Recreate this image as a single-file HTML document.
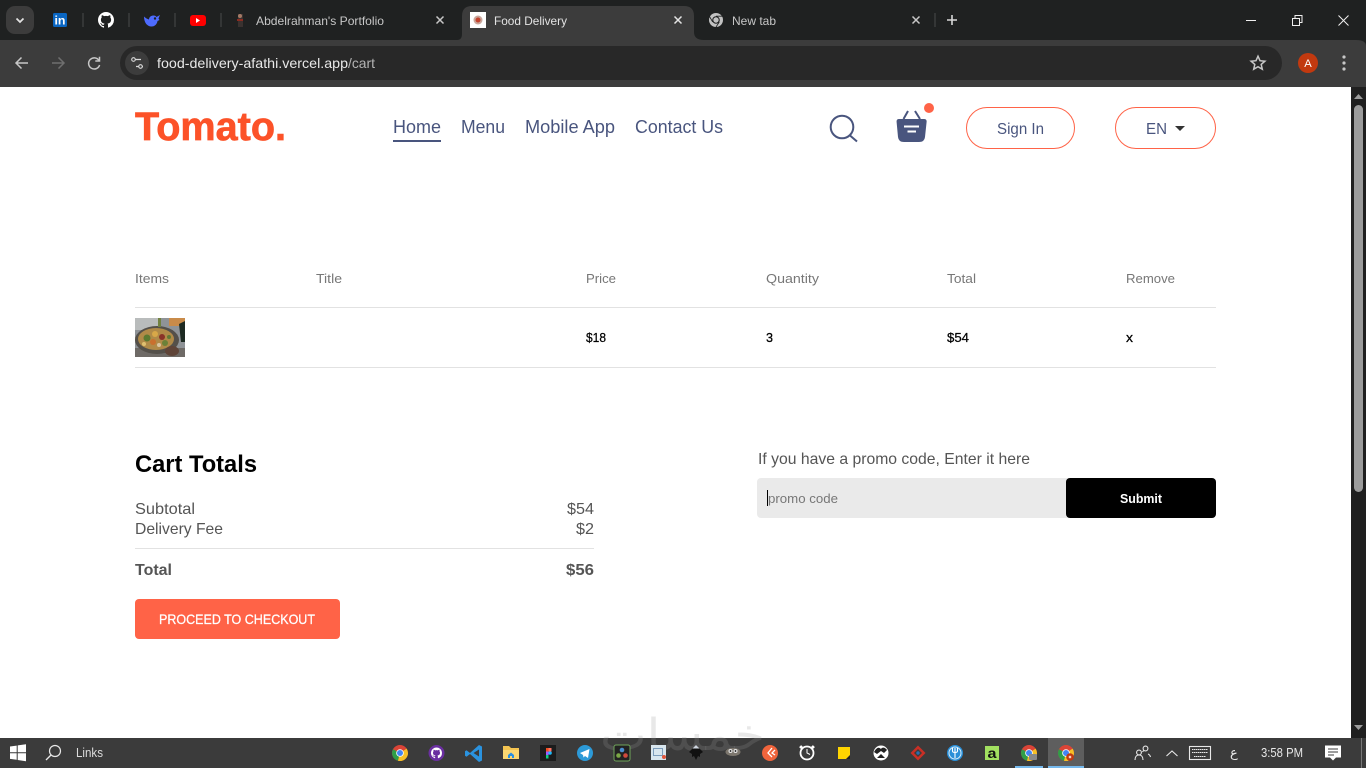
<!DOCTYPE html>
<html lang="en">
<head>
<meta charset="utf-8">
<title>Food Delivery</title>
<style>
html,body{margin:0;padding:0;width:1366px;height:768px;overflow:hidden;background:#fff}
svg{display:block}
text{font-family:"Liberation Sans",sans-serif}
.n{font-size:18px;fill:#49557e}
.h{font-size:13px;fill:#777}
.r{font-size:13px;fill:#000;stroke:#000;stroke-width:.25}
.b{font-size:16px;fill:#555}
.tab{font-size:12px;fill:#c7c7c7}
.ic{fill:none;stroke:#c7c7c7;stroke-width:1.5}
</style>
</head>
<body>
<svg width="1366" height="768" viewBox="0 0 1366 768" xmlns="http://www.w3.org/2000/svg">
<defs>
<symbol id="chrome" viewBox="0 0 16 16">
<circle cx="8" cy="8" r="8" fill="#db4437"/>
<path d="M8 8 1 4.200A8 8 0 0 0 6 15.800z" fill="#2f9e48"/>
<path d="M8 8 6 15.800A8 8 0 0 0 16 8 8 8 0 0 0 14.600 3.600z" fill="#f6c026"/>
<circle cx="8" cy="8" r="3.800" fill="#fff"/><circle cx="8" cy="8" r="3" fill="#4285f4"/>
</symbol>
<symbol id="gh" viewBox="0 0 16 16">
<path fill="currentColor" d="M8 0C3.580 0 0 3.580 0 8c0 3.540 2.290 6.530 5.470 7.590.4.070.55-.17.55-.38v-1.340c-2.230.48-2.690-1.070-2.690-1.070-.36-.93-.89-1.170-.89-1.170-.73-.5.050-.49.050-.49.8.060 1.230.82 1.230.82.71 1.220 1.870.87 2.330.66.070-.52.28-.87.5-1.070-1.780-.2-3.640-.89-3.640-3.950 0-.87.31-1.590.82-2.150-.08-.2-.36-1.020.08-2.120 0 0 .67-.21 2.200.82a7.600 7.600 0 0 1 4 0c1.530-1.030 2.200-.82 2.200-.82.44 1.100.16 1.920.08 2.120.51.56.82 1.270.82 2.150 0 3.070-1.870 3.750-3.650 3.950.29.25.54.73.54 1.480v2.200c0 .21.15.46.55.38A8 8 0 0 0 16 8c0-4.420-3.580-8-8-8z"/>
</symbol>
</defs>

<!-- page -->
<rect width="1366" height="768" fill="#fff"/>

<!-- browser chrome -->
<rect width="1366" height="40" fill="#1f2121"/>
<rect y="30" width="1366" height="57" fill="#3c3c3c"/>
<path d="M0 40C0 40 4 40 10 40H457Q462 40 462 34V16Q462 6 472 6H684Q694 6 694 16V32Q694 40 704 40H1356Q1366 40 1366 46V30H0Z" fill="#1f2121"/>
<path d="M462 46V16Q462 6 472 6H684Q694 6 694 16V46Z" fill="#3c3c3c"/>
<rect x="6" y="6" width="28" height="28" rx="9" fill="#3c3c3c"/>
<path d="M16.500 18.500 20 22l3.500-3.500" fill="none" stroke="#e3e3e3" stroke-width="1.700"/>

<!-- pinned tabs -->
<rect x="53" y="13" width="14" height="14" rx="1.500" fill="#0a66c2"/>
<text x="54.500" y="24.500" font-size="11.500" font-weight="bold" fill="#fff" textLength="11" lengthAdjust="spacingAndGlyphs">in</text>
<g fill="#4a4c4c"><rect x="82.500" y="13" width="1" height="14"/><rect x="128.500" y="13" width="1" height="14"/><rect x="174.500" y="13" width="1" height="14"/><rect x="220.500" y="13" width="1" height="14"/><rect x="934.500" y="13" width="1" height="14"/></g>
<use href="#gh" x="98" y="12" width="16" height="16" color="#fff"/>
<path d="M144 16.500c1.500 1.500 3 2.500 5 3 0-2 1.500-4 4.500-4 1.500 0 2.500.5 3 1.500l3.500-2-1.500 3.500 1 1.500-2 1c-.5 3-2.500 5.500-6 5.500-4 0-7.500-3.500-7.500-10z" fill="#4d6bfe"/>
<circle cx="155" cy="18.500" r="1.200" fill="#1f2121"/>
<rect x="190" y="15" width="16" height="11" rx="3" fill="#f00"/>
<path d="M196 18v5l4-2.500z" fill="#fff"/>

<!-- portfolio tab -->
<rect x="238" y="14" width="5" height="13" fill="#3a3230"/><circle cx="240" cy="16" r="2" fill="#a47a66"/><rect x="237" y="19" width="6" height="2" fill="#8a2b20"/>
<text x="256" y="25" class="tab" textLength="128" lengthAdjust="spacingAndGlyphs">Abdelrahman's Portfolio</text>
<path d="M436.500 16.500l7 7m0-7l-7 7" stroke="#c7c7c7" stroke-width="1.500"/>

<!-- active tab -->
<rect x="470" y="12" width="16" height="16" fill="#fff"/>
<circle cx="478" cy="20" r="4.500" fill="#c9a79c"/><circle cx="478" cy="20" r="2.500" fill="#c4432e"/>
<text x="494" y="25" class="tab" style="fill:#e3e3e3" textLength="73" lengthAdjust="spacingAndGlyphs">Food Delivery</text>
<path d="M674.500 16.500l7 7m0-7l-7 7" stroke="#e3e3e3" stroke-width="1.500"/>

<!-- new tab -->
<circle cx="716" cy="20" r="7" fill="#c2c2c2"/><circle cx="716" cy="20" r="3.800" fill="#1f2121"/><circle cx="716" cy="20" r="2.700" fill="#c2c2c2"/>
<path d="M716 16.200h6.500M712.700 22 709.500 16.500M719.300 22 716 27" stroke="#1f2121" stroke-width=".8"/>
<text x="732" y="25" class="tab" textLength="44" lengthAdjust="spacingAndGlyphs">New tab</text>
<path d="M912.500 16.500l7 7m0-7l-7 7" stroke="#c7c7c7" stroke-width="1.500"/>
<path d="M952 15v10M947 20h10" stroke="#d8d8d8" stroke-width="1.600"/>

<!-- window controls -->
<rect x="1246" y="20" width="10" height="1" fill="#f0f0f0"/>
<path d="M1292.500 18.500h7v7h-7zM1295 18.500V15.500h7v7h-2.500" fill="none" stroke="#f0f0f0" stroke-width="1"/>
<path d="M1338.500 15.500l10 10m0-10l-10 10" stroke="#f0f0f0" stroke-width="1"/>

<!-- toolbar -->
<path d="M28 63H16.500M21.500 57.500 16 63l5.500 5.500" fill="none" stroke="#c7c7c7" stroke-width="1.500"/>
<path d="M52 63h11.500M58.500 57.500 64 63l-5.500 5.500" fill="none" stroke="#6f6f6f" stroke-width="1.500"/>
<path d="M99 60.500A5.600 5.600 0 1 0 99.600 65M99.500 56.800v4.200h-4.200" fill="none" stroke="#c7c7c7" stroke-width="1.500"/>
<rect x="120" y="46" width="1162" height="34" rx="17" fill="#282828"/>
<circle cx="137" cy="63" r="12" fill="#3c3c3c"/>
<path d="M133 59.500h8M136 66.500h7" stroke="#d8d8d8" stroke-width="1.200"/>
<circle cx="133.500" cy="59.500" r="1.800" fill="#3c3c3c" stroke="#d8d8d8" stroke-width="1.100"/>
<circle cx="140.500" cy="66.500" r="1.800" fill="#3c3c3c" stroke="#d8d8d8" stroke-width="1.100"/>
<text x="157" y="68" font-size="14" fill="#e8e8e8" textLength="191" lengthAdjust="spacingAndGlyphs">food-delivery-afathi.vercel.app</text>
<text x="348" y="68" font-size="14" fill="#b4b4b4" textLength="27" lengthAdjust="spacingAndGlyphs">/cart</text>
<path d="M1258 56.200l2 4.500 4.900.5-3.700 3.200 1.100 4.800-4.300-2.500-4.300 2.500 1.100-4.800-3.700-3.200 4.900-.5z" fill="none" stroke="#c7c7c7" stroke-width="1.500"/>
<circle cx="1308" cy="63" r="10" fill="#c2390f"/>
<text x="1304.300" y="67" font-size="11" fill="#fff" textLength="7.500" lengthAdjust="spacingAndGlyphs">A</text>
<g fill="#c7c7c7"><circle cx="1344" cy="57" r="1.600"/><circle cx="1344" cy="63" r="1.600"/><circle cx="1344" cy="69" r="1.600"/></g>

<!-- header -->
<text x="135" y="140" font-size="40" font-weight="bold" fill="#fc5228" stroke="#fc5228" stroke-width=".7" textLength="151" lengthAdjust="spacingAndGlyphs">Tomato.</text>
<text x="393" y="133" class="n" textLength="48" lengthAdjust="spacingAndGlyphs">Home</text>
<rect x="393" y="140" width="48" height="2" fill="#49557e"/>
<text x="461" y="133" class="n" textLength="44" lengthAdjust="spacingAndGlyphs">Menu</text>
<text x="525" y="133" class="n" textLength="90" lengthAdjust="spacingAndGlyphs">Mobile App</text>
<text x="635" y="133" class="n" textLength="88" lengthAdjust="spacingAndGlyphs">Contact Us</text>

<circle cx="842" cy="127" r="11.300" fill="none" stroke="#49557e" stroke-width="2"/>
<path d="M850 135.500 857 141.500" stroke="#49557e" stroke-width="2"/>

<path d="M899 119H924Q927 119 926.600 122L925 137Q924.500 142 919 142H904Q898.500 142 898 137L896.600 122Q896.300 119 899 119Z" fill="#49557e"/>
<path d="M908 111 903.500 119M915 111 920 119" stroke="#49557e" stroke-width="2"/>
<path d="M904 126.500H919M907.500 131.500H916" stroke="#fff" stroke-width="2"/>
<circle cx="929" cy="108" r="5" fill="#ff6347"/>

<rect x="966.500" y="107.500" width="108" height="41" rx="20.500" fill="#fff" stroke="#ff6347"/>
<text x="997" y="134" font-size="16" fill="#49557e" textLength="47" lengthAdjust="spacingAndGlyphs">Sign In</text>
<rect x="1115.500" y="107.500" width="100" height="41" rx="20.500" fill="#fff" stroke="#ff6347"/>
<text x="1146" y="134" font-size="16" fill="#49557e" textLength="21" lengthAdjust="spacingAndGlyphs">EN</text>
<path d="M1175 126h10l-5 5z" fill="#333"/>

<!-- table -->
<text x="135" y="283" class="h" textLength="34" lengthAdjust="spacingAndGlyphs">Items</text>
<text x="316" y="283" class="h" textLength="26" lengthAdjust="spacingAndGlyphs">Title</text>
<text x="586" y="283" class="h" textLength="30" lengthAdjust="spacingAndGlyphs">Price</text>
<text x="766" y="283" class="h" textLength="53" lengthAdjust="spacingAndGlyphs">Quantity</text>
<text x="947" y="283" class="h" textLength="29" lengthAdjust="spacingAndGlyphs">Total</text>
<text x="1126" y="283" class="h" textLength="49" lengthAdjust="spacingAndGlyphs">Remove</text>
<rect x="135" y="307" width="1081" height="1" fill="#e2e2e2"/>
<rect x="135" y="367" width="1081" height="1" fill="#e2e2e2"/>

<!-- food image -->
<svg x="135" y="318" width="50" height="39" viewBox="0 0 50 39">
<rect width="50" height="39" fill="#8f9397"/>
<rect width="24" height="12" fill="#b9bcbc"/>
<rect x="34" width="16" height="8" fill="#c98b4a"/>
<path d="M44 6 50 3V24L46 24Z" fill="#1d2a22"/>
<rect y="30" width="50" height="9" fill="#6e6a66"/>
<ellipse cx="22" cy="22" rx="22" ry="14" fill="#54504a"/>
<ellipse cx="21" cy="21" rx="18" ry="11" fill="#b08a48"/>
<circle cx="12" cy="20" r="3.500" fill="#5c7a30"/><circle cx="20" cy="16" r="3" fill="#d8a848"/>
<circle cx="27" cy="19" r="3" fill="#8a3328"/><circle cx="18" cy="24" r="3" fill="#c9702e"/>
<circle cx="30" cy="25" r="3" fill="#6b8138"/><circle cx="9" cy="26" r="2" fill="#e0c070"/>
<circle cx="24" cy="27" r="2" fill="#d9c4a0"/><circle cx="34" cy="19" r="2" fill="#5f7a35"/>
<path d="M23 0h3v9h-3z" fill="#71813f"/>
<ellipse cx="37" cy="33" rx="7" ry="5" fill="#5f4438"/>
</svg>

<text x="586" y="342" class="r" textLength="20" lengthAdjust="spacingAndGlyphs">$18</text>
<text x="766" y="342" class="r" textLength="7" lengthAdjust="spacingAndGlyphs">3</text>
<text x="947" y="342" class="r" textLength="22" lengthAdjust="spacingAndGlyphs">$54</text>
<text x="1126" y="342" class="r" textLength="7" lengthAdjust="spacingAndGlyphs">x</text>

<!-- totals -->
<text x="135" y="472" font-size="24" font-weight="bold" fill="#000" textLength="122" lengthAdjust="spacingAndGlyphs">Cart Totals</text>
<text x="135" y="514" class="b" textLength="60" lengthAdjust="spacingAndGlyphs">Subtotal</text>
<text x="567" y="514" class="b" textLength="27" lengthAdjust="spacingAndGlyphs">$54</text>
<text x="135" y="534" class="b" textLength="88" lengthAdjust="spacingAndGlyphs">Delivery Fee</text>
<text x="576" y="534" class="b" textLength="18" lengthAdjust="spacingAndGlyphs">$2</text>
<rect x="135" y="548" width="459" height="1" fill="#e2e2e2"/>
<text x="135" y="575" class="b" font-weight="bold" textLength="37" lengthAdjust="spacingAndGlyphs">Total</text>
<text x="566" y="575" class="b" font-weight="bold" textLength="28" lengthAdjust="spacingAndGlyphs">$56</text>
<rect x="135" y="599" width="205" height="40" rx="4" fill="#ff6347"/>
<text x="159" y="624" font-size="14" fill="#fff" stroke="#fff" stroke-width=".25" textLength="156" lengthAdjust="spacingAndGlyphs">PROCEED TO CHECKOUT</text>

<!-- promo -->
<text x="758" y="464" class="b" textLength="272" lengthAdjust="spacingAndGlyphs">If you have a promo code, Enter it here</text>
<rect x="757" y="478" width="320" height="40" rx="4" fill="#eaeaea"/>
<rect x="1066" y="478" width="150" height="40" rx="4" fill="#000"/>
<rect x="767" y="490" width="1" height="16" fill="#000"/>
<text x="768" y="503" font-size="13" fill="#777" textLength="70" lengthAdjust="spacingAndGlyphs">promo code</text>
<text x="1120" y="503" font-size="13" font-weight="bold" fill="#fff" textLength="42" lengthAdjust="spacingAndGlyphs">Submit</text>

<!-- scrollbar -->
<rect x="1351" y="87" width="15" height="651" fill="#1f1f1f"/>
<path d="M1354 99l4.500-5 4.500 5z" fill="#9b9b9b"/>
<rect x="1354" y="105" width="9" height="387" rx="4.500" fill="#9b9b9b"/>
<path d="M1354 725l4.500 5 4.500-5z" fill="#9b9b9b"/>

<!-- taskbar -->
<rect y="738" width="1366" height="30" fill="#3b3b3b"/>
<rect x="1048" y="738" width="36" height="30" fill="#5e5e5e"/>
<rect x="1015" y="766" width="28" height="2" fill="#76b9ed"/>
<rect x="1048" y="766" width="36" height="2" fill="#76b9ed"/>

<!-- watermark -->
<text x="765" y="750" font-size="44" style="font-family:'DejaVu Sans',sans-serif" fill="#969696" fill-opacity=".22" textLength="165" lengthAdjust="spacingAndGlyphs" direction="rtl">خمسات</text>

<!-- start and search -->
<path d="M10 746.500l6.700-.9v6.600H10zM17.700 745.400l8.300-1.200v8H17.700zM10 753.200h6.700v6.600l-6.700-.9zM17.700 753.200H26v8l-8.300-1.200z" fill="#fff"/>
<circle cx="55" cy="751" r="5.500" fill="none" stroke="#e8e8e8" stroke-width="1.200"/>
<path d="M51 755l-5 5" stroke="#e8e8e8" stroke-width="1.300"/>
<text x="76" y="757" font-size="13" fill="#ddd" textLength="27" lengthAdjust="spacingAndGlyphs">Links</text>

<!-- taskbar apps -->
<use href="#chrome" x="392" y="745" width="16" height="16"/>
<circle cx="436.500" cy="753" r="8" fill="#6a2fa0"/>
<use href="#gh" x="431" y="747.500" width="11" height="11" color="#fff"/>
<path d="M479 745l-9 8-3.500-2.800-1.500 1v4.600l1.500 1 3.500-2.800 9 8 3-1.500v-14z" fill="#2a93e0"/>
<path d="M479 749.500l-5.500 3.500 5.500 3.500z" fill="#3b3b3b"/>
<path d="M503 746h6l2 2h8v11h-16z" fill="#f4c451"/><rect x="503" y="750" width="16" height="9" fill="#fbd872"/><path d="M508 758v-3l3-2.500 3 2.500v3h-2v-2h-2v2z" fill="#2a8fe0"/>
<rect x="540" y="745" width="16" height="16" fill="#1c1c1c"/>
<g><circle cx="550" cy="753" r="1.800" fill="#1abcfe"/><rect x="546" y="748" width="2.500" height="3.500" fill="#f24e1e"/><rect x="548.500" y="748" width="3" height="3.500" fill="#ff7262"/><rect x="546" y="751.500" width="2.500" height="3.500" fill="#a259ff"/><rect x="546" y="755" width="2.500" height="3.500" fill="#0acf83"/></g>
<circle cx="585" cy="753" r="8" fill="#2c9ad8"/><path d="M580 753l9.500-4-1.500 9-3-2-1.500 1.500-.5-2.500z" fill="#fff"/>
<rect x="614" y="745" width="16" height="16" rx="2" fill="#222" stroke="#6fa45a"/>
<circle cx="622" cy="750" r="2.300" fill="#4a8fd0"/><circle cx="618.500" cy="755.500" r="2.300" fill="#7ba845"/><circle cx="625.500" cy="755.500" r="2.300" fill="#d04a3c"/>
<rect x="651" y="745" width="15" height="15" fill="#d8e6ee"/><rect x="653" y="748" width="10" height="8" fill="#7d9dbb"/><rect x="654" y="749" width="8" height="6" fill="#d8e6ee"/><circle cx="664" cy="757" r="2" fill="#e2563c"/>
<path d="M696 745l7 7-3 2v3l-2-1-2 4-2-4-2 1v-3l-3-2z" fill="#111"/><path d="M696 745l3.500 3.500h-7z" fill="#cfd6e0"/>
<ellipse cx="733" cy="752" rx="7.500" ry="4" fill="#7d776e"/><circle cx="730.500" cy="751" r="2" fill="#e8e8e8"/><circle cx="735.500" cy="751" r="2" fill="#e8e8e8"/><circle cx="730.500" cy="751" r=".9" fill="#111"/><circle cx="735.500" cy="751" r=".9" fill="#111"/>
<circle cx="770" cy="753" r="8" fill="#f0643c"/><path d="M772 748l-4 5 4 4M775 750l-3 3 3 2" fill="none" stroke="#fff" stroke-width="1.300"/>
<circle cx="807" cy="753" r="6.500" fill="#3b3b3b" stroke="#fff" stroke-width="1.800"/><path d="M802 746l-2 2M812 746l2 2" stroke="#fff" stroke-width="2.500"/><path d="M807 749v4l3 1.500" fill="none" stroke="#fff"/>
<rect x="838" y="747" width="12" height="12" fill="#ffd500"/><path d="M850 755v4h-4z" fill="#222"/>
<circle cx="881" cy="753" r="7.500" fill="#fff"/><path d="M874 752c3-5 5-5 7-3 1-2 4-2 6 1l-3 3-3-2-4 3z" fill="#222"/><path d="M877 758l4-4 4 4z" fill="#222"/>
<path d="M918 745.500l7.500 7.500-7.500 7.500-7.500-7.500z" fill="#c92f25"/><path d="M918 749l4 4-4 4-4-4z" fill="#3b3b3b"/><circle cx="918" cy="753" r="1.700" fill="#2a6fb0"/>
<circle cx="955" cy="753" r="8" fill="#2a8fd8"/><circle cx="955" cy="753" r="6" fill="none" stroke="#d8ecf8"/><path d="M955 748v10M952.500 748v3q0 1.500 2.500 1.500t2.500-1.500v-3" fill="none" stroke="#fff" stroke-width="1.100"/>
<rect x="985" y="746" width="14" height="14" fill="#a2e060"/><text x="987.500" y="758" font-size="14" font-weight="bold" fill="#111" textLength="9" lengthAdjust="spacingAndGlyphs">a</text>
<use href="#chrome" x="1021" y="745" width="16" height="16"/>
<rect x="1029" y="754" width="8" height="6" rx="1" fill="#888"/>
<use href="#chrome" x="1058" y="745" width="16" height="16"/>
<circle cx="1070" cy="757" r="3.800" fill="#c2390f"/><rect x="1068.800" y="755.800" width="2.400" height="2.400" fill="#f4d0c0"/>

<!-- tray -->
<g fill="none" stroke="#e8e8e8" stroke-width="1.100">
<circle cx="1145.500" cy="748.500" r="2.400"/><circle cx="1139" cy="752.500" r="2.400"/>
<path d="M1135 760c0-3 1.500-5 4-5s4 2 4 5M1148 754c1.500 .5 2 1.200 2.500 3M1142.500 752c.5-1 1-1.300 1.300-1.500"/>
<path d="M1166.500 756l5.500-5 5.500 5"/>
<rect x="1189.500" y="746.500" width="21" height="13"/>
</g>
<path d="M1192 749.500h16M1192 752.500h16M1194 756.500h12" stroke="#e8e8e8" stroke-width="1" stroke-dasharray="1.500 .5"/>
<text x="1230" y="757" font-size="13" fill="#e8e8e8" style="font-family:'DejaVu Sans',sans-serif">ع</text>
<text x="1261" y="757" font-size="13" fill="#e8e8e8" textLength="42" lengthAdjust="spacingAndGlyphs">3:58 PM</text>
<path d="M1325 745.500h16v12h-5l-3 3-3-3h-5z" fill="#fff"/>
<path d="M1328 749h10M1328 752h10M1328 755h6" stroke="#3b3b3b" stroke-width="1"/>
<rect x="1361" y="738" width="1" height="30" fill="#777"/>
</svg>
</body>
</html>
